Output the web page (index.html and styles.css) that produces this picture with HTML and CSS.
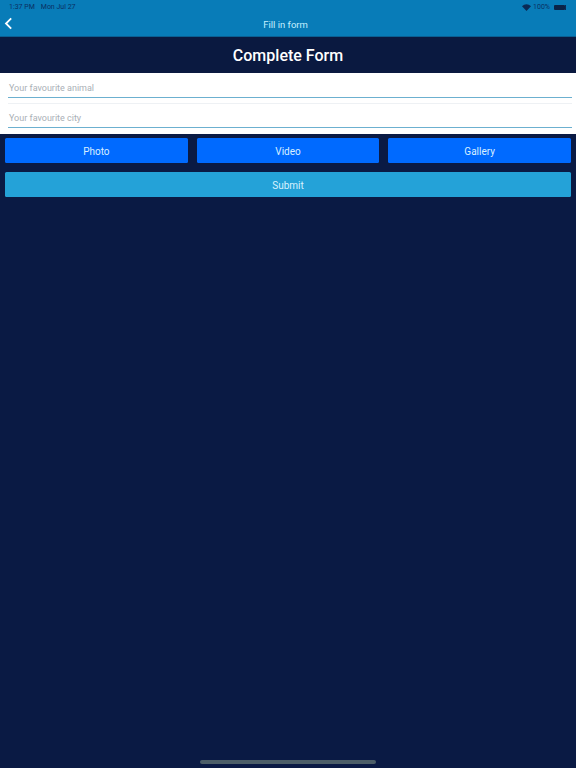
FILE: index.html
```html
<!DOCTYPE html>
<html lang="en">
<head>
<meta charset="utf-8">
<title>Fill in form</title>
<link rel="stylesheet" href="styles.css">
</head>
<body>
<div class="screen">
  <header class="navbar">
    <div class="status">
      <div class="status-left"><span>1:37 PM</span><span>Mon Jul 27</span></div>
      <div class="status-right">
        <svg class="wifi" viewBox="0 0 12 9" width="9" height="7"><path d="M6 9 0 2.8C3.4-.9 8.6-.9 12 2.8Z" fill="#0a2a55"/></svg>
        <span>100%</span>
        <span class="battery"><span class="battery-fill"></span></span>
      </div>
    </div>
    <div class="navrow">
      <svg class="back" viewBox="0 0 10 14" width="9" height="13"><path d="M8 1.2 2.2 7 8 12.8" fill="none" stroke="#fff" stroke-width="2"/></svg>
      <span class="navtitle">Fill in form</span>
    </div>
  </header>
  <h1 class="title">Complete Form</h1>
  <form class="fields">
    <div class="field"><span class="placeholder">Your favourite animal</span></div>
    <div class="field"><span class="placeholder">Your favourite city</span></div>
  </form>
  <div class="actions">
    <button class="btn" type="button">Photo</button>
    <button class="btn" type="button">Video</button>
    <button class="btn" type="button">Gallery</button>
  </div>
  <button class="submit" type="button">Submit</button>
  <div class="home"></div>
</div>
</body>
</html>
```
FILE: styles.css
```css
* { box-sizing: border-box; }
html, body { margin: 0; padding: 0; }
body { font-family: Roboto, "Liberation Sans", sans-serif; background: #0a1a44; }
.screen { position: relative; width: 576px; height: 768px; overflow: hidden; background: #0a1a44; }
.navbar { height: 37px; background: #087cb8; border-bottom: 1px solid #0a5f92; }
.status { height: 13px; padding: 2px 9px 0; display: flex; justify-content: space-between; align-items: center; font-size: 7px; line-height: 11px; color: #0a2f62; }
.status-left { display: flex; gap: 6px; }
.status-right { display: flex; align-items: center; gap: 2px; padding-right: 1px; }
.battery { display: block; width: 12px; height: 5px; margin-left: 2px; border-right: 1px solid #0a2a55; }
.battery-fill { display: block; width: 11px; height: 5px; background: #0a2347; border-radius: 1px; }
.navrow { position: relative; height: 23px; display: flex; align-items: center; justify-content: center; padding-right: 5px; }
.back { position: absolute; left: 4px; top: 4px; }
.navtitle { font-size: 9.5px; font-weight: 400; color: #c4f0ff; }
.title { margin: 0; height: 36px; display: flex; align-items: center; justify-content: center; font-size: 16px; font-weight: 500; color: #fff; background: #0a1940; }
.fields { height: 61px; padding: 0 4px 0 8px; background: #fff; display: flex; flex-direction: column; }
.field { height: 25px; flex: none; border-bottom: 1px solid #6cb0d0; padding: 10px 0 0 1px; font-size: 9px; line-height: 11px; color: #aab0b6; }
.field + .field { height: 24px; margin-top: 6px; padding-top: 9px; box-shadow: 0 -1px 0 #eef1f4; }
.actions { margin-top: 4px; padding: 0 5px; display: flex; gap: 9px; }
.btn { flex: 1 1 0; height: 25px; padding: 2px 0 0; border: 0; border-radius: 1.5px; background: #006aff; color: #d8efff; font: 400 10px Roboto, "Liberation Sans", sans-serif; }
.submit { display: block; width: 566px; height: 25px; margin: 9px 5px 0; padding: 2px 0 0; border: 0; border-radius: 1.5px; background: #24a2d8; color: #d8f2ff; font: 400 10px Roboto, "Liberation Sans", sans-serif; }
.home { position: absolute; left: 200px; top: 760px; width: 176px; height: 3.5px; background: #4c5e68; border-radius: 2px; }
```
